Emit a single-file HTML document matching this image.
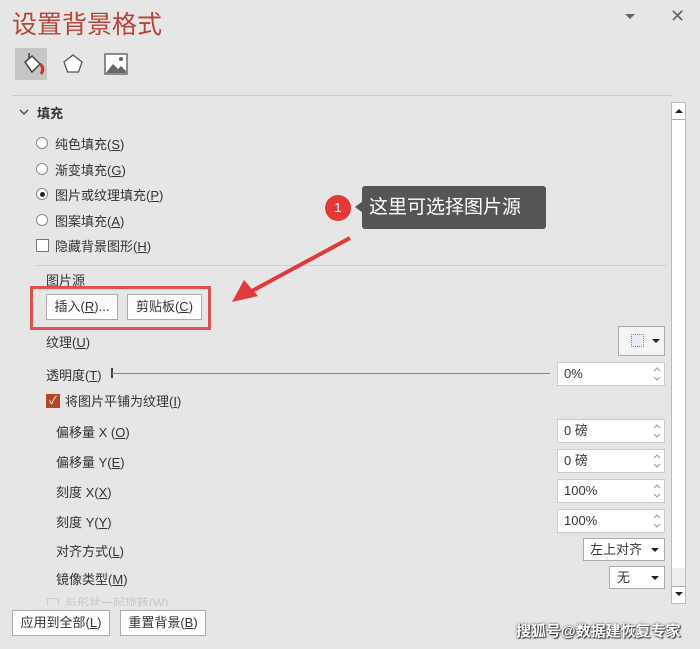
<!DOCTYPE html>
<html><head><meta charset="utf-8"><style>
*{margin:0;padding:0;box-sizing:border-box}
body{width:700px;height:649px;background:#e6e6e6;position:relative;overflow:hidden;font-family:"Liberation Sans","Noto Sans CJK SC",sans-serif;font-size:13px;color:#333}
.a{position:absolute;white-space:nowrap}
.t{font-size:13px;color:#333}
.radio{position:absolute;width:12px;height:12px;border:1px solid #888;border-radius:50%;background:#fff}
.btn{position:absolute;background:#fdfdfd;border:1px solid #aaa;text-align:center;font-size:13px;line-height:24px}
.spin{position:absolute;background:#fff;border:1px solid #ccc;height:24px;width:108px;font-size:13px;line-height:22px;padding-left:6px}
.spin svg{position:absolute;right:3px;top:3px}
</style></head><body>
<div class="a" style="left:12px;top:5px;font-size:25px;color:#b4453a;font-family:'Noto Sans CJK SC',sans-serif">设置背景格式</div>
<div class="a" style="left:625px;top:14px;width:0;height:0;border-left:5px solid transparent;border-right:5px solid transparent;border-top:5px solid #666"></div>
<div class="a" style="left:670px;top:6px;font-size:18px;color:#666">✕</div>
<div class="a" style="left:15px;top:48px;width:32px;height:32px;background:#c6c6c6"></div>
<svg class="a" style="left:15px;top:48px" width="32" height="32"><path d="M10 14 L17 8 L25 16 L17 24 Z" fill="#fff" stroke="#444" stroke-width="1.5"/><path d="M14 10 L14 5" stroke="#444" stroke-width="1.5"/><path d="M25 16 Q30 20 26 26" stroke="#c0392b" stroke-width="3" fill="none"/></svg>
<svg class="a" style="left:62px;top:52px" width="22" height="24"><path d="M11 3 L20 10 L16.5 20 L5.5 20 L2 10 Z" fill="#fff" stroke="#555" stroke-width="1.3"/></svg>
<svg class="a" style="left:104px;top:52px" width="24" height="24"><rect x="1" y="2" width="22" height="20" fill="#fff" stroke="#555" stroke-width="1.3"/><path d="M2 21 L9 12 L14 17 L17 14 L22 19 L22 21Z" fill="#666"/><circle cx="17" cy="7" r="2" fill="#666"/></svg>
<div class="a" style="left:12px;top:95px;width:660px;height:1px;background:#ccc"></div>
<svg class="a" style="left:19px;top:108px" width="10" height="8"><path d="M1 2 L5 6 L9 2" stroke="#444" stroke-width="1.3" fill="none"/></svg>
<div class="a t" style="left:37px;top:103px;font-weight:bold">填充</div>
<div class="radio" style="left:36px;top:137px"></div><div class="a t" style="left:55px;top:134px">纯色填充(<u>S</u>)</div>
<div class="radio" style="left:36px;top:163px"></div><div class="a t" style="left:55px;top:160px">渐变填充(<u>G</u>)</div>
<div class="radio" style="left:36px;top:188px"></div><div class="a" style="left:40px;top:192px;width:5px;height:5px;border-radius:50%;background:#222"></div><div class="a t" style="left:55px;top:185px">图片或纹理填充(<u>P</u>)</div>
<div class="radio" style="left:36px;top:214px"></div><div class="a t" style="left:55px;top:211px">图案填充(<u>A</u>)</div>
<div class="a" style="left:36px;top:239px;width:13px;height:13px;border:1px solid #777;background:#fff"></div><div class="a t" style="left:55px;top:236px">隐藏背景图形(<u>H</u>)</div>
<div class="a" style="left:36px;top:265px;width:630px;height:1px;background:#d0d0d0"></div>
<div class="a t" style="left:46px;top:270px">图片源</div>
<div class="a" style="left:30px;top:286px;width:181px;height:44px;border:3px solid #d9534f"></div>
<div class="btn" style="left:46px;top:294px;width:72px;height:26px">插入(<u>R</u>)...</div>
<div class="btn" style="left:127px;top:294px;width:75px;height:26px">剪贴板(<u>C</u>)</div>
<svg class="a" style="left:220px;top:230px" width="140" height="80"><path d="M130 8 L30 62" stroke="#e03a3a" stroke-width="4"/><path d="M12 72 L24 50 L38 66 Z" fill="#e03a3a"/></svg>
<div class="a" style="left:325px;top:195px;width:26px;height:26px;border-radius:50%;background:#e53935;color:#fff;font-size:13px;text-align:center;line-height:26px">1</div>
<div class="a" style="left:355px;top:201px;width:0;height:0;border-top:6px solid transparent;border-bottom:6px solid transparent;border-right:8px solid #555"></div>
<div class="a" style="left:362px;top:186px;width:184px;height:43px;background:#555;border-radius:3px;color:#fff;font-size:19px;line-height:43px;padding-left:7px">这里可选择图片源</div>
<div class="a t" style="left:46px;top:332px">纹理(<u>U</u>)</div>
<div class="a" style="left:618px;top:326px;width:47px;height:30px;border:1px solid #aaa;background:#f4f4f4"></div>
<div class="a" style="left:631px;top:334px;width:13px;height:13px;border:1px dotted #789;background:#e8eef4"></div>
<div class="a" style="left:652px;top:339px;border-left:4px solid transparent;border-right:4px solid transparent;border-top:4px solid #222"></div>
<div class="a t" style="left:46px;top:365px">透明度(<u>T</u>)</div>
<div class="a" style="left:111px;top:368px;width:2px;height:10px;background:#444"></div>
<div class="a" style="left:112px;top:373px;width:438px;height:1px;background:#888"></div>
<div class="spin" style="left:557px;top:362px">0%<svg width="8" height="16"><path d="M1 5 L4 2 L7 5 M1 11 L4 14 L7 11" stroke="#999" fill="none"/></svg></div>
<div class="a" style="left:46px;top:394px;width:14px;height:14px;background:#b5452f;color:#fff;font-size:11px;line-height:14px;text-align:center">✓</div>
<div class="a t" style="left:65px;top:391px">将图片平铺为纹理(<u>I</u>)</div>
<div class="a t" style="left:56px;top:422px">偏移量 X (<u>O</u>)</div><div class="spin" style="left:557px;top:419px">0 磅<svg width="8" height="16"><path d="M1 5 L4 2 L7 5 M1 11 L4 14 L7 11" stroke="#999" fill="none"/></svg></div>
<div class="a t" style="left:56px;top:452px">偏移量 Y(<u>E</u>)</div><div class="spin" style="left:557px;top:449px">0 磅<svg width="8" height="16"><path d="M1 5 L4 2 L7 5 M1 11 L4 14 L7 11" stroke="#999" fill="none"/></svg></div>
<div class="a t" style="left:56px;top:482px">刻度 X(<u>X</u>)</div><div class="spin" style="left:557px;top:479px">100%<svg width="8" height="16"><path d="M1 5 L4 2 L7 5 M1 11 L4 14 L7 11" stroke="#999" fill="none"/></svg></div>
<div class="a t" style="left:56px;top:512px">刻度 Y(<u>Y</u>)</div><div class="spin" style="left:557px;top:509px">100%<svg width="8" height="16"><path d="M1 5 L4 2 L7 5 M1 11 L4 14 L7 11" stroke="#999" fill="none"/></svg></div>
<div class="a t" style="left:56px;top:541px">对齐方式(<u>L</u>)</div>
<div class="a" style="left:583px;top:538px;width:82px;height:23px;border:1px solid #aaa;background:#fff;padding-left:6px;line-height:21px">左上对齐</div>
<div class="a" style="left:651px;top:548px;border-left:4px solid transparent;border-right:4px solid transparent;border-top:4px solid #222"></div>
<div class="a t" style="left:56px;top:569px">镜像类型(<u>M</u>)</div>
<div class="a" style="left:609px;top:566px;width:56px;height:23px;border:1px solid #aaa;background:#fff;padding-left:7px;line-height:21px">无</div>
<div class="a" style="left:651px;top:576px;border-left:4px solid transparent;border-right:4px solid transparent;border-top:4px solid #222"></div>
<div class="a" style="left:47px;top:598px;width:12px;height:8px;border:1px solid #ccc;border-bottom:none"></div>
<div class="a" style="left:65px;top:594px;color:#c8c8c8;font-size:12px;height:12px;overflow:hidden">与形状一起旋转(W)</div>
<div class="a" style="left:671px;top:102px;width:15px;height:502px;background:#fff;border:1px solid #bbb"></div>
<div class="a" style="left:672px;top:119px;width:13px;height:449px;background:#fff;border-top:1px solid #aaa"></div>
<div class="a" style="left:672px;top:568px;width:13px;height:18px;background:#eee"></div>
<div class="a" style="left:675px;top:109px;border-left:4px solid transparent;border-right:4px solid transparent;border-bottom:4px solid #222"></div>
<div class="a" style="left:672px;top:586px;width:13px;height:17px;border-top:1px solid #aaa"></div>
<div class="a" style="left:675px;top:592px;border-left:4px solid transparent;border-right:4px solid transparent;border-top:4px solid #222"></div>
<div class="btn" style="left:12px;top:610px;width:98px;height:26px">应用到全部(<u>L</u>)</div>
<div class="btn" style="left:120px;top:610px;width:86px;height:26px">重置背景(<u>B</u>)</div>
<div class="a" style="left:516px;top:620px;font-size:15px;font-weight:bold;color:#fff;text-shadow:0 0 2px #333,1px 1px 1px #333">搜狐号@数据建恢复专家</div>
</body></html>
